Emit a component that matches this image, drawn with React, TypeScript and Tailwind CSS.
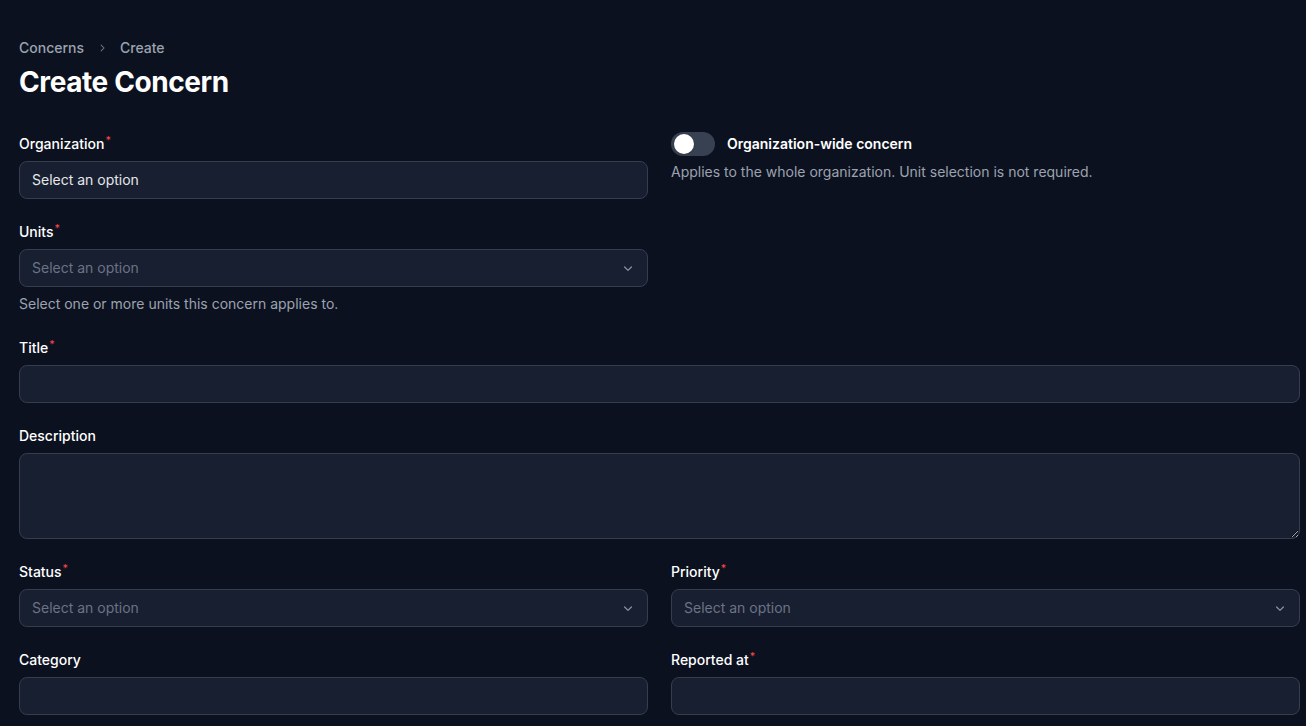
import React from "react";

function Label({ text, required }: { text: string; required?: boolean }) {
  return (
    <label className="pt-px text-sm font-medium leading-5 text-white">
      {text}
      {required && <sup className="ml-px text-[#ef4444] font-medium">*</sup>}
    </label>
  );
}

function Chevron() {
  return (
    <svg width="16" height="16" viewBox="0 0 20 20" fill="currentColor" className="text-[#8b93a3]">
      <path
        fillRule="evenodd"
        d="M5.22 8.22a.75.75 0 0 1 1.06 0L10 11.94l3.72-3.72a.75.75 0 1 1 1.06 1.06l-4.25 4.25a.75.75 0 0 1-1.06 0L5.22 9.28a.75.75 0 0 1 0-1.06Z"
        clipRule="evenodd"
      />
    </svg>
  );
}

const box = "h-[38px] w-full rounded-lg border border-[#363e4e] bg-[#181f30]";

function SelectBox({ placeholder, chevron = true, filled }: { placeholder: string; chevron?: boolean; filled?: boolean }) {
  return (
    <div className={box + " flex items-center justify-between pl-3 pr-[11px]"}>
      <span className={"text-sm " + (filled ? "text-[#e5e7eb]" : "text-[#6b7385]")}>{placeholder}</span>
      {chevron && <Chevron />}
    </div>
  );
}

function Field({ label, required, children, help }: { label: string; required?: boolean; children: React.ReactNode; help?: string }) {
  return (
    <div className="flex flex-col gap-[7px]">
      <Label text={label} required={required} />
      {children}
      {help && <p className="mb-px text-sm leading-5 text-[#9ca3af]">{help}</p>}
    </div>
  );
}

export default function App() {
  return (
    <div
      className="min-h-screen w-full bg-[#0c1120] pl-[19px] pr-[6px] pt-[38px]"
      style={{ fontFamily: "Inter, 'Noto Sans', sans-serif" }}
    >
      <nav className="flex items-center gap-x-[11px] text-sm font-medium leading-5 text-[#9ca3af]">
        <span>Concerns</span>
        <svg width="14" height="14" viewBox="0 0 20 20" fill="currentColor" className="text-[#6b7280]">
          <path
            fillRule="evenodd"
            d="M8.22 5.22a.75.75 0 0 1 1.06 0l4.25 4.25a.75.75 0 0 1 0 1.06l-4.25 4.25a.75.75 0 0 1-1.06-1.06L11.94 10 8.22 6.28a.75.75 0 0 1 0-1.06Z"
            clipRule="evenodd"
          />
        </svg>
        <span>Create</span>
      </nav>
      <h1 className="mt-[4px] text-[28px] font-bold leading-[40px] tracking-[-0.4px] text-white">Create Concern</h1>

      <div className="mt-[31px] grid grid-cols-2 gap-x-[23px] gap-y-[22px]">
        <Field label="Organization" required>
          <SelectBox placeholder="Select an option" chevron={false} filled />
        </Field>
        <div className="-mt-px flex flex-col">
          <div className="flex items-center gap-3">
            <div className="flex h-6 w-11 items-center rounded-full bg-[#374151] px-[3px]">
              <div className="h-[20px] w-[20px] rounded-full bg-white shadow" />
            </div>
            <span className="text-sm font-semibold leading-5 text-white">Organization-wide concern</span>
          </div>
          <p className="mt-[6px] text-sm leading-5 text-[#9ca3af]">
            Applies to the whole organization. Unit selection is not required.
          </p>
        </div>

        <Field label="Units" required help="Select one or more units this concern applies to.">
          <SelectBox placeholder="Select an option" />
        </Field>
        <div />

        <div className="col-span-2">
          <Field label="Title" required>
            <div className={box} />
          </Field>
        </div>

        <div className="col-span-2">
          <Field label="Description">
            <textarea className="h-[86px] w-full resize-y rounded-lg border border-[#363e4e] bg-[#181f30] px-3 py-2 text-sm text-white outline-none" style={{ colorScheme: "dark" }} />
          </Field>
        </div>

        <Field label="Status" required>
          <SelectBox placeholder="Select an option" />
        </Field>
        <Field label="Priority" required>
          <SelectBox placeholder="Select an option" />
        </Field>

        <Field label="Category">
          <div className={box} />
        </Field>
        <Field label="Reported at" required>
          <div className={box} />
        </Field>
      </div>
    </div>
  );
}
